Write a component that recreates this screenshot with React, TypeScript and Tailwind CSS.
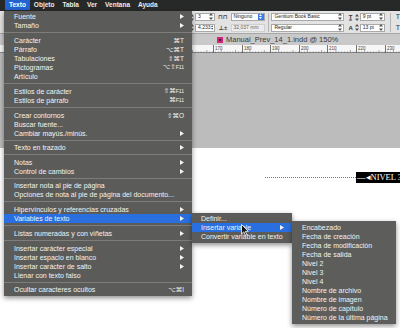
import React from "react";

type MenuItem =
    | { sep: 5 | 6 }
    | { label: string; shortcut?: string; fkey?: string; arrow?: boolean; active?: boolean };

const mainMenu: MenuItem[] = [
    { label: "Fuente", arrow: true },
    { label: "Tamaño", arrow: true },
    { sep: 6 },
    { label: "Carácter", shortcut: "⌘T" },
    { label: "Párrafo", shortcut: "⌥⌘T" },
    { label: "Tabulaciones", shortcut: "⇧⌘T" },
    { label: "Pictogramas", shortcut: "⌥⇧", fkey: "F11" },
    { label: "Artículo" },
    { sep: 6 },
    { label: "Estilos de carácter", shortcut: "⇧⌘", fkey: "F11" },
    { label: "Estilos de párrafo", shortcut: "⌘", fkey: "F11" },
    { sep: 6 },
    { label: "Crear contornos", shortcut: "⇧⌘O" },
    { label: "Buscar fuente..." },
    { label: "Cambiar mayús./minús.", arrow: true },
    { sep: 5 },
    { label: "Texto en trazado", arrow: true },
    { sep: 6 },
    { label: "Notas", arrow: true },
    { label: "Control de cambios", arrow: true },
    { sep: 5 },
    { label: "Insertar nota al pie de página" },
    { label: "Opciones de nota al pie de página del documento..." },
    { sep: 6 },
    { label: "Hipervínculos y referencias cruzadas", arrow: true },
    { label: "Variables de texto", arrow: true, active: true },
    { sep: 6 },
    { label: "Listas numeradas y con viñetas", arrow: true },
    { sep: 6 },
    { label: "Insertar carácter especial", arrow: true },
    { label: "Insertar espacio en blanco", arrow: true },
    { label: "Insertar carácter de salto", arrow: true },
    { label: "Llenar con texto falso" },
    { sep: 5 },
    { label: "Ocultar caracteres ocultos", shortcut: "⌥⌘I" },
];

const variablesMenu: MenuItem[] = [
    { label: "Definir..." },
    { label: "Insertar variable", arrow: true, active: true },
    { label: "Convertir variable en texto" },
];

const insertMenu = [
    "Encabezado",
    "Fecha de creación",
    "Fecha de modificación",
    "Fecha de salida",
    "Nivel 2",
    "Nivel 3",
    "Nivel 4",
    "Nombre de archivo",
    "Nombre de imagen",
    "Número de capítulo",
    "Número de la última página",
];

function Arrow() {
    return (
        <svg width="4" height="5" viewBox="0 0 4 5" className="shrink-0">
            <polygon points="0,0 4,2.5 0,5" fill="#f2f2f2" />
        </svg>
    );
}

function MenuRows({ items, padLeft }: { items: MenuItem[]; padLeft: string }) {
    return (
        <>
            {items.map((item, i) => {
                if ("sep" in item) {
                    return (
                        <div key={i} className={`flex items-center ${item.sep === 6 ? "h-[6px]" : "h-[5px]"}`}>
                            <div className="h-px w-full bg-[#7d7e7c]" />
                        </div>
                    );
                }
                return (
                    <div
                        key={i}
                        className={`flex h-[9px] items-center justify-between ${padLeft} pr-[8px] ${
                            item.active ? "bg-[#2a6fe0]" : ""
                        }`}>
                        <span className="whitespace-nowrap">{item.label}</span>
                        {item.arrow && <Arrow />}
                        {item.shortcut && (
                            <span className="flex items-baseline whitespace-nowrap text-[6.5px] leading-[9px]">
                                {item.shortcut}
                                {item.fkey && <span className="text-[5px]">{item.fkey}</span>}
                            </span>
                        )}
                    </div>
                );
            })}
        </>
    );
}

function Stepper() {
    return (
        <svg width="4" height="7" viewBox="0 0 4 7">
            <polygon points="2,0 4,2.5 0,2.5" fill="#555" />
            <polygon points="2,7 4,4.5 0,4.5" fill="#555" />
        </svg>
    );
}

function Field({ text, w, gray }: { text: string; w: string; gray?: boolean }) {
    return (
        <div
            className={`flex h-[8px] ${w} items-center justify-between border border-[#a9a9a9] bg-white pl-[2px] pr-[1px] text-[5px] ${
                gray ? "text-[#777]" : "text-[#222]"
            }`}>
            <span className="whitespace-nowrap">{text}</span>
            <Stepper />
        </div>
    );
}

const rulerMarks = [
    { x: 21, n: "170" },
    { x: 50, n: "180" },
    { x: 78, n: "190" },
    { x: 107, n: "200" },
    { x: 135, n: "210" },
    { x: 164, n: "220" },
    { x: 193, n: "230" },
];

function Ruler() {
    const ticks: number[] = [];
    for (let x = 0; x < 208; x += 2.87) ticks.push(x);
    return (
        <svg width="208" height="8" viewBox="0 0 208 8" className="block">
            {ticks.map((x, i) => (
                <line
                    key={i}
                    x1={x + 0.5}
                    x2={x + 0.5}
                    y1={i % 5 === 0 ? 5 : 6.5}
                    y2={8}
                    stroke="#666"
                    strokeWidth="0.6"
                />
            ))}
            {rulerMarks.map((m) => (
                <g key={m.n}>
                    <line x1={m.x + 0.5} x2={m.x + 0.5} y1={0} y2={8} stroke="#555" strokeWidth="0.8" />
                    <text x={m.x + 2} y={5} fontSize="4.5" fill="#444" fontFamily="Liberation Sans, sans-serif">
                        {m.n}
                    </text>
                </g>
            ))}
        </svg>
    );
}

function Cursor() {
    return (
        <svg width="8" height="12" viewBox="0 0 8 12">
            <path d="M0.5 0.5 L0.5 10 L2.8 7.8 L4.4 11.2 L5.8 10.6 L4.3 7.3 L7.3 7.3 Z" fill="#111" stroke="#fff" strokeWidth="0.8" />
        </svg>
    );
}

export default function App() {
    return (
        <div
            className="relative flex h-[328px] w-[400px] flex-col overflow-hidden bg-white text-[7px] leading-[9px]"
            style={{ fontFamily: '"Liberation Sans", "DejaVu Sans", sans-serif' }}>
            {/* menu bar */}
            <div className="flex h-[11px] shrink-0 items-start bg-[#272928] pl-[5px] text-[6.5px] font-bold leading-[10px] text-[#ececec]">
                <span className="bg-[#2462cf] px-[4px] text-white">Texto</span>
                <span className="px-[4px]">Objeto</span>
                <span className="px-[4px]">Tabla</span>
                <span className="px-[4px]">Ver</span>
                <span className="px-[4px]">Ventana</span>
                <span className="px-[4px]">Ayuda</span>
            </div>

            {/* control panel */}
            <div className="flex h-[22px] shrink-0 items-center bg-[#e3e3e3] pl-[190px] text-[#222]">
                <div className="flex flex-col gap-[3px]">
                    <Stepper />
                    <Stepper />
                </div>
                <div className="ml-[1px] flex flex-col gap-[3px]">
                    <Field text="3" w="w-[20px]" />
                    <Field text="4,233" w="w-[20px]" />
                </div>
                <div className="ml-[3px] flex flex-col items-center gap-[3px] text-[6px] font-bold leading-[8px] text-[#444]">
                    <span>⊓⊓</span>
                    <span>⊥±</span>
                </div>
                <div className="ml-[3px] flex flex-col gap-[3px]">
                    <div className="flex h-[8px] w-[34px] items-center justify-between border border-[#a9a9a9] bg-white pl-[2px] text-[5px]">
                        <span>Ninguno</span>
                        <span className="flex h-full w-[6px] items-center justify-center bg-[#3d7be6]">
                            <svg width="3" height="5" viewBox="0 0 3 5">
                                <polygon points="1.5,0 3,2 0,2" fill="#fff" />
                                <polygon points="1.5,5 3,3 0,3" fill="#fff" />
                            </svg>
                        </span>
                    </div>
                    <div className="flex h-[8px] w-[34px] items-center border border-[#cfcfcf] bg-[#ececec] pl-[2px] text-[5px] text-[#666]">
                        32,037 mm
                    </div>
                </div>
                <div className="ml-[3px] h-[19px] w-px bg-[#b5b5b5]" />
                <div className="ml-[3px] flex flex-col gap-[3px]">
                    <Field text="Gentium Book Basic" w="w-[73px]" />
                    <Field text="Regular" w="w-[73px]" />
                </div>
                <div className="ml-[4px] flex flex-col items-center gap-[3px] text-[6px] font-bold leading-[8px] text-[#333]">
                    <span>T͇</span>
                    <span>A</span>
                </div>
                <div className="ml-[2px] flex flex-col gap-[3px]">
                    <Stepper />
                    <Stepper />
                </div>
                <div className="ml-[1px] flex flex-col gap-[3px]">
                    <Field text="9 pt" w="w-[25px]" />
                    <Field text="13 pt" w="w-[25px]" />
                </div>
                <div className="ml-[5px] h-[19px] w-px bg-[#b5b5b5]" />
                <div className="ml-[5px] flex flex-col gap-[3px] text-[7px] leading-[8px] text-[#333]">
                    <span>T</span>
                    <span>T</span>
                </div>
            </div>

            {/* document tab */}
            <div className="flex h-[12px] shrink-0 items-center border-t border-[#a8a8a8] bg-[#c9c9c9] pl-[217px] text-[7.5px] text-[#3a3a3a]">
                <span className="mr-[3px] flex h-[6px] w-[6px] items-center justify-center bg-[#d6247a] text-[4px] font-bold text-[#222]">
                    ■
                </span>
                <span>Manual_Prev_14_1.indd @ 150%</span>
            </div>

            {/* ruler */}
            <div className="flex h-[8px] shrink-0 border-b border-[#888] bg-[#f6f6f6] pl-[192px]">
                <Ruler />
            </div>

            {/* pasteboard */}
            <div className="h-[95px] shrink-0 bg-[#bcbcbc]" />

            {/* page */}
            <div className="flex-1 bg-white pl-[265px] pt-[24px]">
                <div className="flex h-[11px] items-center">
                    <div className="h-0 flex-1 border-t border-dotted border-[#777]" />
                    <div
                        className="flex h-[11px] w-[44px] shrink-0 items-center whitespace-nowrap bg-black pl-[1px] text-[8.5px] text-white"
                        style={{ fontFamily: '"Liberation Serif", serif' }}>
                        —◂NIVEL 3
                    </div>
                </div>
            </div>

            {/* Texto menu */}
            <div className="absolute left-[4px] top-[11px] w-[188px] bg-[#5b5c5a] pb-[2px] pt-[0.5px] text-[#f2f2f2] shadow-[0_2px_5px_rgba(0,0,0,0.45)]">
                <MenuRows items={mainMenu} padLeft="pl-[10px]" />
            </div>

            {/* Variables de texto submenu */}
            <div className="absolute left-[192px] top-[213px] w-[100px] bg-[#5b5c5a] pb-[2.5px] pt-[0.5px] text-[#f2f2f2] shadow-[0_2px_5px_rgba(0,0,0,0.45)]">
                <MenuRows items={variablesMenu} padLeft="pl-[9px]" />
            </div>

            {/* Insertar variable submenu */}
            <div className="absolute left-[292px] top-[221px] w-[104px] bg-[#5d5e5c] pb-[2px] pt-[1.5px] text-[#f2f2f2] shadow-[0_2px_5px_rgba(0,0,0,0.45)]">
                {insertMenu.map((label) => (
                    <div key={label} className="flex h-[9px] items-center whitespace-nowrap pl-[10px]">
                        {label}
                    </div>
                ))}
            </div>

            {/* mouse pointer */}
            <div className="absolute left-[241px] top-[224px]">
                <Cursor />
            </div>
        </div>
    );
}
